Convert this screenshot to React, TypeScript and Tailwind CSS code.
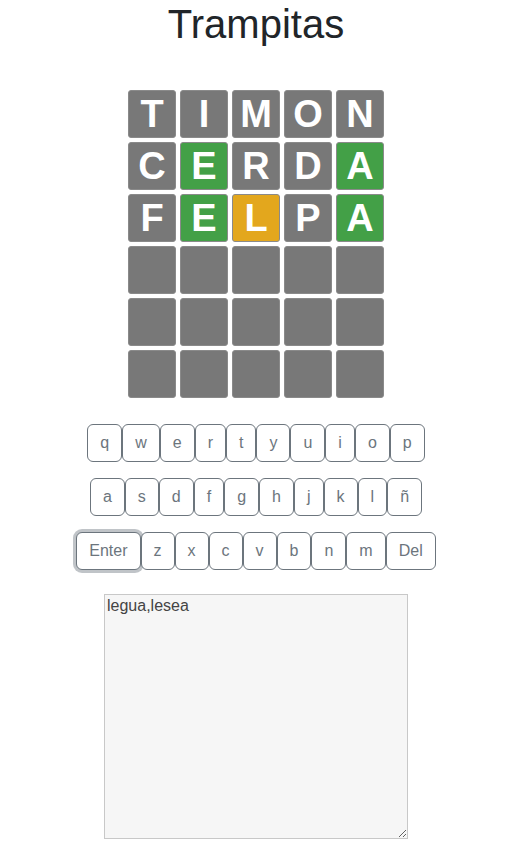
import { FC } from 'react';

type TileState = 'absent' | 'correct' | 'present' | 'empty';

interface Tile {
  letter: string;
  state: TileState;
}

const guesses: Tile[][] = [
  [
    { letter: 'T', state: 'absent' },
    { letter: 'I', state: 'absent' },
    { letter: 'M', state: 'absent' },
    { letter: 'O', state: 'absent' },
    { letter: 'N', state: 'absent' },
  ],
  [
    { letter: 'C', state: 'absent' },
    { letter: 'E', state: 'correct' },
    { letter: 'R', state: 'absent' },
    { letter: 'D', state: 'absent' },
    { letter: 'A', state: 'correct' },
  ],
  [
    { letter: 'F', state: 'absent' },
    { letter: 'E', state: 'correct' },
    { letter: 'L', state: 'present' },
    { letter: 'P', state: 'absent' },
    { letter: 'A', state: 'correct' },
  ],
];

const emptyRow: Tile[] = Array.from({ length: 5 }, () => ({ letter: '', state: 'empty' }));
const board: Tile[][] = [...guesses, emptyRow, emptyRow, emptyRow];

const tileColors: Record<TileState, string> = {
  absent: 'bg-[#787878]',
  correct: 'bg-[#43a047]',
  present: 'bg-[#e3a71d]',
  empty: 'bg-[#787878]',
};

const keyRows = [
  ['q', 'w', 'e', 'r', 't', 'y', 'u', 'i', 'o', 'p'],
  ['a', 's', 'd', 'f', 'g', 'h', 'j', 'k', 'l', 'ñ'],
  ['Enter', 'z', 'x', 'c', 'v', 'b', 'n', 'm', 'Del'],
];

const Key: FC<{ label: string }> = ({ label }) => (
  <button
    className={`h-[38px] px-3 border border-[#6c757d] rounded-md bg-white text-[16px] leading-6 text-[#6c757d] ${
      label === 'Enter' ? 'shadow-[0_0_0_3px_rgba(130,138,145,0.5)]' : ''
    }`}
  >
    {label}
  </button>
);

const App: FC = () => {
  return (
    <div className="w-[512px] bg-white font-['Liberation_Sans',Arial,sans-serif] text-[#212529]">
      <h1 className="text-center text-[40px] leading-[48px] font-normal">Trampitas</h1>

      {/* Board */}
      <div className="mt-[42px] flex flex-col items-center gap-1">
        {board.map((row, r) => (
          <div key={r} className="flex gap-1">
            {row.map((tile, c) => (
              <div
                key={c}
                className={`w-12 h-12 flex items-center justify-center rounded-[3px] border border-[#8a8a8a] text-white font-bold text-[38px] ${tileColors[tile.state]}`}
              >
                {tile.letter}
              </div>
            ))}
          </div>
        ))}
      </div>

      {/* Keyboard */}
      <div className="mt-[26px] flex flex-col items-center gap-4">
        {keyRows.map((row, i) => (
          <div key={i} className="flex">
            {row.map(k => (
              <Key key={k} label={k} />
            ))}
          </div>
        ))}
      </div>

      {/* Output */}
      <div className="mt-6 flex justify-center pb-6">
        <textarea
          readOnly
          defaultValue="legua,lesea"
          className="w-[304px] h-[245px] p-0.5 border border-[#c8c8c8] bg-[#f6f6f6] text-[16px] leading-[18px] text-[#444] resize"
        />
      </div>
    </div>
  );
};

export default App;
